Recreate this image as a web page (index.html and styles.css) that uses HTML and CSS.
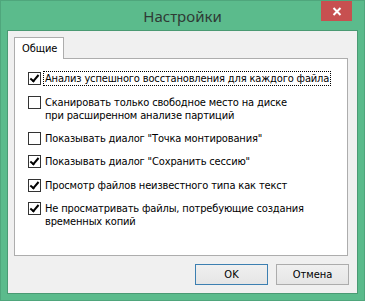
FILE: index.html
```html
<!DOCTYPE html>
<html lang="ru">
<head>
<meta charset="utf-8">
<title>Настройки</title>
<link rel="stylesheet" href="styles.css">
</head>
<body>
<div class="window">
  <div class="titlebar">
    <span class="title">Настройки</span>
    <span class="close"><svg width="10" height="9" viewBox="0 0 10 9"><path d="M1.5 1 L8.5 8 M8.5 1 L1.5 8" stroke="#fff" stroke-width="2" fill="none"/></svg></span>
  </div>
  <div class="client">
    <div class="tabs">
      <div class="tab">Общие</div>
      <div class="panel">
        <div class="opt r1"><span class="box on"></span><span class="lbl focus">Анализ успешного восстановления для каждого файла</span></div>
        <div class="opt r2"><span class="box"></span><span class="lbl">Сканировать только свободное место на диске<br>при расширенном анализе партиций</span></div>
        <div class="opt r3"><span class="box"></span><span class="lbl">Показывать диалог "Точка монтирования"</span></div>
        <div class="opt r4"><span class="box on"></span><span class="lbl">Показывать диалог "Сохранить сессию"</span></div>
        <div class="opt r5"><span class="box on"></span><span class="lbl">Просмотр файлов неизвестного типа как текст</span></div>
        <div class="opt r6"><span class="box on"></span><span class="lbl">Не просматривать файлы, потребующие создания<br>временных копий</span></div>
      </div>
    </div>
    <div class="buttons">
      <button class="btn default">OK</button>
      <button class="btn">Отмена</button>
    </div>
  </div>
</div>
</body>
</html>
```
FILE: styles.css
```css
* { box-sizing: border-box; }
html, body { margin: 0; padding: 0; }
body { width: 365px; height: 301px; overflow: hidden; font-family: "DejaVu Sans Condensed", "DejaVu Sans", sans-serif; font-size: 11px; color: #000; }
.window { width: 365px; height: 301px; background: #5bbb8c; border: 1px solid #4fa67c; padding: 0 6px 6px 6px; display: flex; flex-direction: column; }
.titlebar { height: 29px; position: relative; display: flex; justify-content: center; align-items: center; }
.title { font-family: "Noto Sans", "Open Sans", sans-serif; font-size: 15px; color: #2f3a35; padding-top: 1px; }
.close { position: absolute; right: 6px; top: 0; width: 31px; height: 20px; background: #c75050; display: flex; align-items: center; justify-content: center; }
.client { flex: 1; background: #f0f0f0; border: 1px solid #4a9a73; padding: 6px 8px 8px 6px; display: flex; flex-direction: column; }
.tabs { flex: 1; display: flex; flex-direction: column; align-items: flex-start; width: 334px; }
.tab { position: relative; z-index: 1; height: 22px; width: 50px; background: #fff; border: 1px solid #adadad; border-bottom: none; padding: 4px 0 0 7px; margin-bottom: -1px; letter-spacing: -0.1px; }
.panel { flex: 1; align-self: stretch; background: #fff; border: 1px solid #adadad; padding: 0 0 0 13px; }
.opt { display: flex; align-items: flex-start; }
.r1 { margin-top: 13px; }
.r2 { margin-top: 10px; }
.r3 { margin-top: 9px; }
.r4 { margin-top: 9px; }
.r5 { margin-top: 10px; }
.r6 { margin-top: 9px; }
.box { width: 13px; height: 13px; border: 1px solid #333; background: #fff; flex: none; position: relative; }
.box.on::after { content: ""; position: absolute; left: 3px; top: 0px; width: 3px; height: 7px; border: solid #000; border-width: 0 2px 2px 0; transform: rotate(40deg); }
.lbl { margin-left: 2px; padding: 0 1px; line-height: 13px; border: 1px dotted transparent; margin-top: -1px; letter-spacing: -0.15px; }
.lbl.focus { border-color: #000; }
.buttons { display: flex; justify-content: flex-end; gap: 8px; margin-top: 8px; }
.btn { width: 73px; height: 21px; font-family: inherit; font-size: 11px; color: #000; border: 1px solid #acacac; background: linear-gradient(#f0f0f0, #e5e5e5); padding: 0; }
.btn.default { border-color: #3c7fb1; }
```
